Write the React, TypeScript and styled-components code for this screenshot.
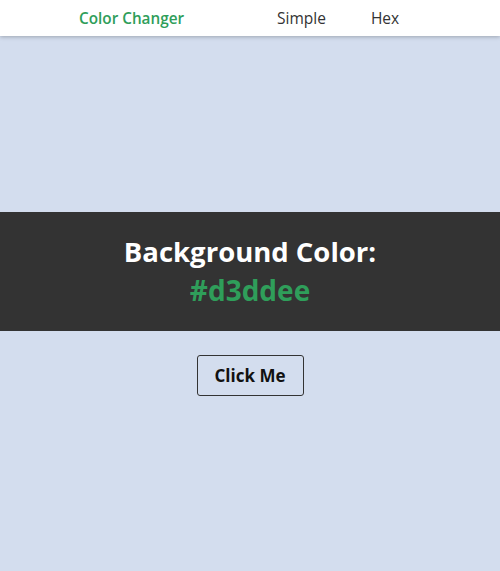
import { useState } from 'react'
import styled, { createGlobalStyle } from 'styled-components'

const colors = ['#d3ddee', '#f1e4d3', '#dcefd8', '#f3d6dc', '#e4dcf2']

const GlobalStyle = createGlobalStyle<{ bg: string }>`
  html, body {
    margin: 0;
    padding: 0;
  }
  body {
    background: ${(p) => p.bg};
    font-family: 'Open Sans', 'DejaVu Sans', sans-serif;
  }
`

const App = () => {
  const [index, setIndex] = useState(0)
  const bg = colors[index]

  return (
    <>
      <GlobalStyle bg={bg} />
      <Nav>
        <Brand>Color Changer</Brand>
        <NavLinks>
          <NavLink>Simple</NavLink>
          <NavLink>Hex</NavLink>
        </NavLinks>
      </Nav>
      <Main>
        <Banner>
          <Title>Background Color:</Title>
          <ColorCode>{bg}</ColorCode>
        </Banner>
        <Button onClick={() => setIndex((index + 1) % colors.length)}>Click Me</Button>
      </Main>
    </>
  )
}

export default App

const Nav = styled.nav`
  height: 36px;
  background: #fff;
  box-shadow: 0 1px 4px rgba(0, 0, 0, 0.25);
  display: flex;
  align-items: center;
  padding-left: 79px;
  box-sizing: border-box;
  position: relative;
`

const Brand = styled.div`
  color: #2f9e5a;
  font-size: 15.3px;
  font-weight: 600;
  width: 198px;
`

const NavLinks = styled.div`
  display: flex;
  gap: 45px;
`

const NavLink = styled.a`
  color: #333;
  font-size: 15.5px;
  cursor: pointer;
`

const Main = styled.main`
  min-height: calc(100vh - 36px);
  display: flex;
  flex-direction: column;
  align-items: center;
  justify-content: center;
  gap: 24px;
`

const Banner = styled.div`
  width: 100%;
  height: 119px;
  background: #333;
  display: flex;
  flex-direction: column;
  align-items: center;
  justify-content: center;
`

const Title = styled.h1`
  margin: 0;
  color: #fff;
  font-size: 27.5px;
  font-weight: 700;
  line-height: 38px;
`

const ColorCode = styled.div`
  color: #2f9e5a;
  font-size: 28px;
  font-weight: 700;
  line-height: 38px;
`

const Button = styled.button`
  width: 107px;
  height: 41px;
  background: transparent;
  border: 1px solid #333;
  border-radius: 3px;
  font-family: inherit;
  font-size: 17px;
  font-weight: 700;
  color: #111;
  cursor: pointer;
`
